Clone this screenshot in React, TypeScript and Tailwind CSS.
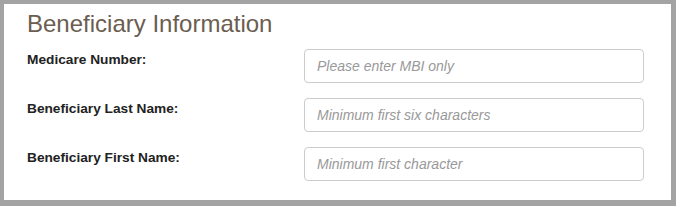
export default function App() {
  const fields = [
    { label: 'Medicare Number:', placeholder: 'Please enter MBI only' },
    { label: 'Beneficiary Last Name:', placeholder: 'Minimum first six characters' },
    { label: 'Beneficiary First Name:', placeholder: 'Minimum first character' },
  ];

  return (
    <div className="h-[206px] w-[676px] bg-[#a3a3a3] pt-[4px] pl-[4px] font-['Liberation_Sans',Arial,sans-serif]">
      <div className="h-[196px] w-[667px] bg-white pl-[23px] pt-[7px]">
        <h2 className="text-[24px] leading-[26px] text-[#6b5d50]">Beneficiary Information</h2>
        <div className="mt-[12px] flex flex-col gap-[15px]">
          {fields.map((f) => (
            <div key={f.label} className="flex items-start">
              <label className="w-[277px] shrink-0 pt-[2px] text-[13.7px] font-bold leading-[18px] text-[#222]">{f.label}</label>
              <input
                type="text"
                placeholder={f.placeholder}
                className="h-[34px] w-[340px] rounded-[4px] border border-[#ccc] px-[12px] text-[14px] italic text-[#555] outline-none placeholder:text-[#999]"
              />
            </div>
          ))}
        </div>
      </div>
    </div>
  );
}
